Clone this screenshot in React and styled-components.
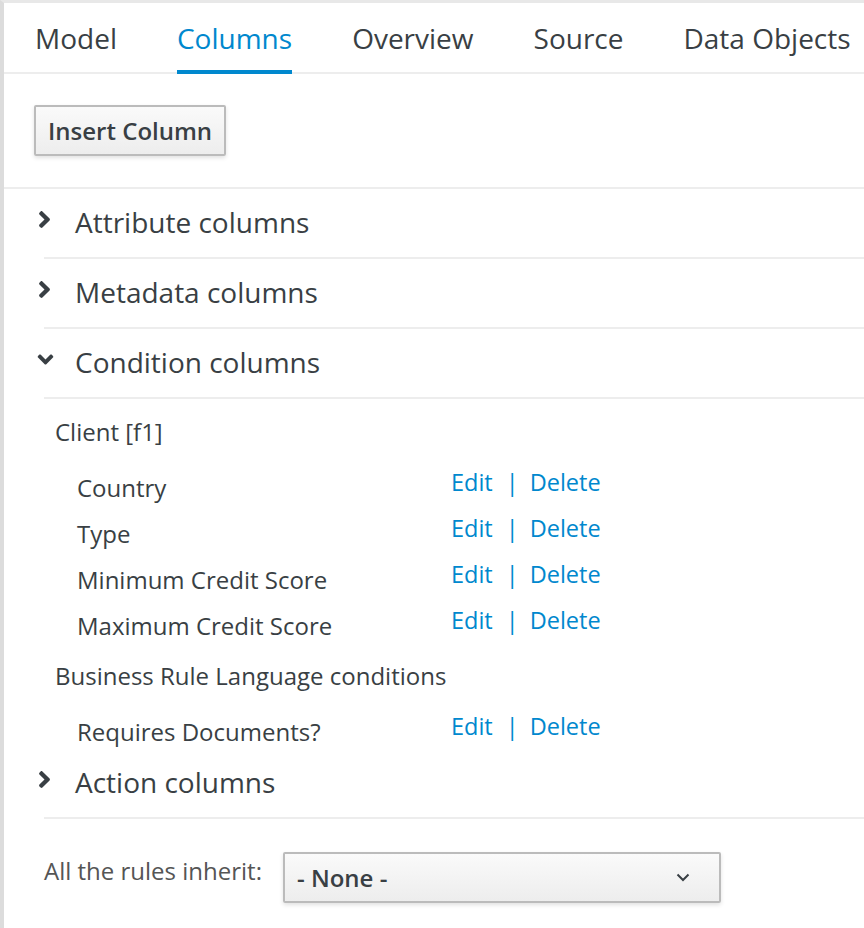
import React, { useState } from 'react'
import styled, { createGlobalStyle } from 'styled-components'
import { FaAngleRight, FaAngleDown } from 'react-icons/fa'

const GlobalStyle = createGlobalStyle`
  html, body {
    margin: 0;
    padding: 0;
    background: #fff;
  }
  body {
    font-family: "Open Sans", "Noto Sans", sans-serif;
    color: #393f44;
  }
`

const Page = styled.div`
  min-height: 928px;
  box-sizing: border-box;
  border-left: 4px solid #dcdcdc;
  border-top: 3px solid #e8e8e8;
  overflow: hidden;
`

const TabBar = styled.nav`
  display: flex;
  height: 69px;
  padding-left: 1px;
  border-bottom: 2px solid #ededed;
`

const Tab = styled.div`
  margin: 0 30px -2px;
  display: flex;
  align-items: center;
  font-size: 28px;
  white-space: nowrap;
  color: ${(p) => (p.$active ? '#0088ce' : '#393f44')};
  border-bottom: 4px solid ${(p) => (p.$active ? '#0088ce' : 'transparent')};
  padding-top: 2px;
  cursor: pointer;
`

const Toolbar = styled.div`
  padding: 31px 30px 31px;
  border-bottom: 2px solid #ededed;
`

const Button = styled.button`
  height: 51px;
  padding: 0 12px;
  font-family: inherit;
  font-size: 24px;
  font-weight: 600;
  color: #393f44;
  background: linear-gradient(#fafafa, #ededed);
  border: 2px solid #bbb;
  border-radius: 2px;
  box-shadow: 0 2px 4px rgba(0, 0, 0, 0.12);
`

const Accordion = styled.div`
  padding-left: 32px;
`

const Panel = styled.section``

const Header = styled.div`
  height: 70px;
  box-sizing: border-box;
  padding-bottom: 4px;
  display: flex;
  align-items: center;
  font-size: 28px;
  color: #393f44;
  position: relative;
  cursor: pointer;
`

const HeaderLine = styled.div`
  position: absolute;
  left: 8px;
  right: 0;
  bottom: 0;
  height: 2px;
  background: #ededed;
`

const Chevron = styled.span`
  width: 39px;
  display: flex;
  align-items: center;
  margin-top: -6px;
  color: #393f44;
  svg {
    width: ${(p) => (p.$open ? 19 : 17)}px;
    height: ${(p) => (p.$open ? 25 : 27)}px;
  }
`

const Body = styled.div`
  padding: 20px 0 2px 19px;
  display: flex;
  flex-direction: column;
  gap: 22px;
`

const Group = styled.div``

const GroupLabel = styled.div`
  font-size: 24px;
  line-height: 26px;
  margin-bottom: 22px;
  color: #393f44;
`

const Rows = styled.div`
  display: flex;
  flex-direction: column;
  gap: 10px;
  padding-left: 22px;
`

const Row = styled.div`
  display: flex;
  align-items: flex-start;
  height: 36px;
`

const RowLabel = styled.div`
  width: 374px;
  padding-top: 6px;
  font-size: 24px;
  line-height: 30px;
  color: #393f44;
`

const Actions = styled.div`
  display: flex;
  align-items: center;
  font-size: 23.5px;
  line-height: 30px;
  color: #0088ce;
`

const Link = styled.a`
  color: #0088ce;
  text-decoration: none;
  cursor: pointer;
`

const Pipe = styled.span`
  margin: 0 11px 0 13px;
`

const Footer = styled.div`
  display: flex;
  align-items: flex-start;
  padding: 33px 0 0 40px;
`

const FooterLabel = styled.label`
  font-size: 24px;
  line-height: 30px;
  padding-top: 4px;
  color: #555;
  margin-right: 21px;
`

const Select = styled.div`
  width: 438px;
  height: 51px;
  box-sizing: border-box;
  display: flex;
  align-items: center;
  justify-content: space-between;
  padding: 0 29px 0 12px;
  border: 2px solid #bbb;
  border-radius: 2px;
  background: linear-gradient(#fafafa, #ededed);
  box-shadow: 0 2px 4px rgba(0, 0, 0, 0.12);
  font-size: 24px;
  font-weight: 600;
  color: #393f44;
`

const Caret = () => (
  <svg width="14" height="9" viewBox="0 0 14 9">
    <polyline points="1.5,1.5 7,7 12.5,1.5" fill="none" stroke="#393f44" strokeWidth="2" />
  </svg>
)

const tabs = ['Model', 'Columns', 'Overview', 'Source', 'Data Objects']

const conditionGroups = [
  { label: 'Client [f1]', rows: ['Country', 'Type', 'Minimum Credit Score', 'Maximum Credit Score'] },
  { label: 'Business Rule Language conditions', rows: ['Requires Documents?'] },
]

function PanelHeader({ title, open, onToggle }) {
  return (
    <Header onClick={onToggle}>
      <Chevron $open={open}>{open ? <FaAngleDown /> : <FaAngleRight />}</Chevron>
      {title}
      <HeaderLine />
    </Header>
  )
}

export default function App() {
  const [active, setActive] = useState('Columns')
  const [open, setOpen] = useState({ attr: false, meta: false, cond: true, action: false })

  function toggle(key) {
    setOpen((prev) => ({ ...prev, [key]: !prev[key] }))
  }

  return (
    <>
      <GlobalStyle />
      <Page>
        <TabBar>
          {tabs.map((t) => (
            <Tab key={t} $active={t === active} onClick={() => setActive(t)}>
              {t}
            </Tab>
          ))}
        </TabBar>
        <Toolbar>
          <Button>Insert Column</Button>
        </Toolbar>
        <Accordion>
          <Panel>
            <PanelHeader title="Attribute columns" open={open.attr} onToggle={() => toggle('attr')} />
          </Panel>
          <Panel>
            <PanelHeader title="Metadata columns" open={open.meta} onToggle={() => toggle('meta')} />
          </Panel>
          <Panel>
            <PanelHeader title="Condition columns" open={open.cond} onToggle={() => toggle('cond')} />
            {open.cond && (
              <Body>
                {conditionGroups.map((g) => (
                  <Group key={g.label}>
                    <GroupLabel>{g.label}</GroupLabel>
                    <Rows>
                      {g.rows.map((r) => (
                        <Row key={r}>
                          <RowLabel>{r}</RowLabel>
                          <Actions>
                            <Link>Edit</Link>
                            <Pipe>|</Pipe>
                            <Link>Delete</Link>
                          </Actions>
                        </Row>
                      ))}
                    </Rows>
                  </Group>
                ))}
              </Body>
            )}
          </Panel>
          <Panel>
            <PanelHeader title="Action columns" open={open.action} onToggle={() => toggle('action')} />
          </Panel>
        </Accordion>
        <Footer>
          <FooterLabel>All the rules inherit:</FooterLabel>
          <Select>
            - None -
            <Caret />
          </Select>
        </Footer>
      </Page>
    </>
  )
}
